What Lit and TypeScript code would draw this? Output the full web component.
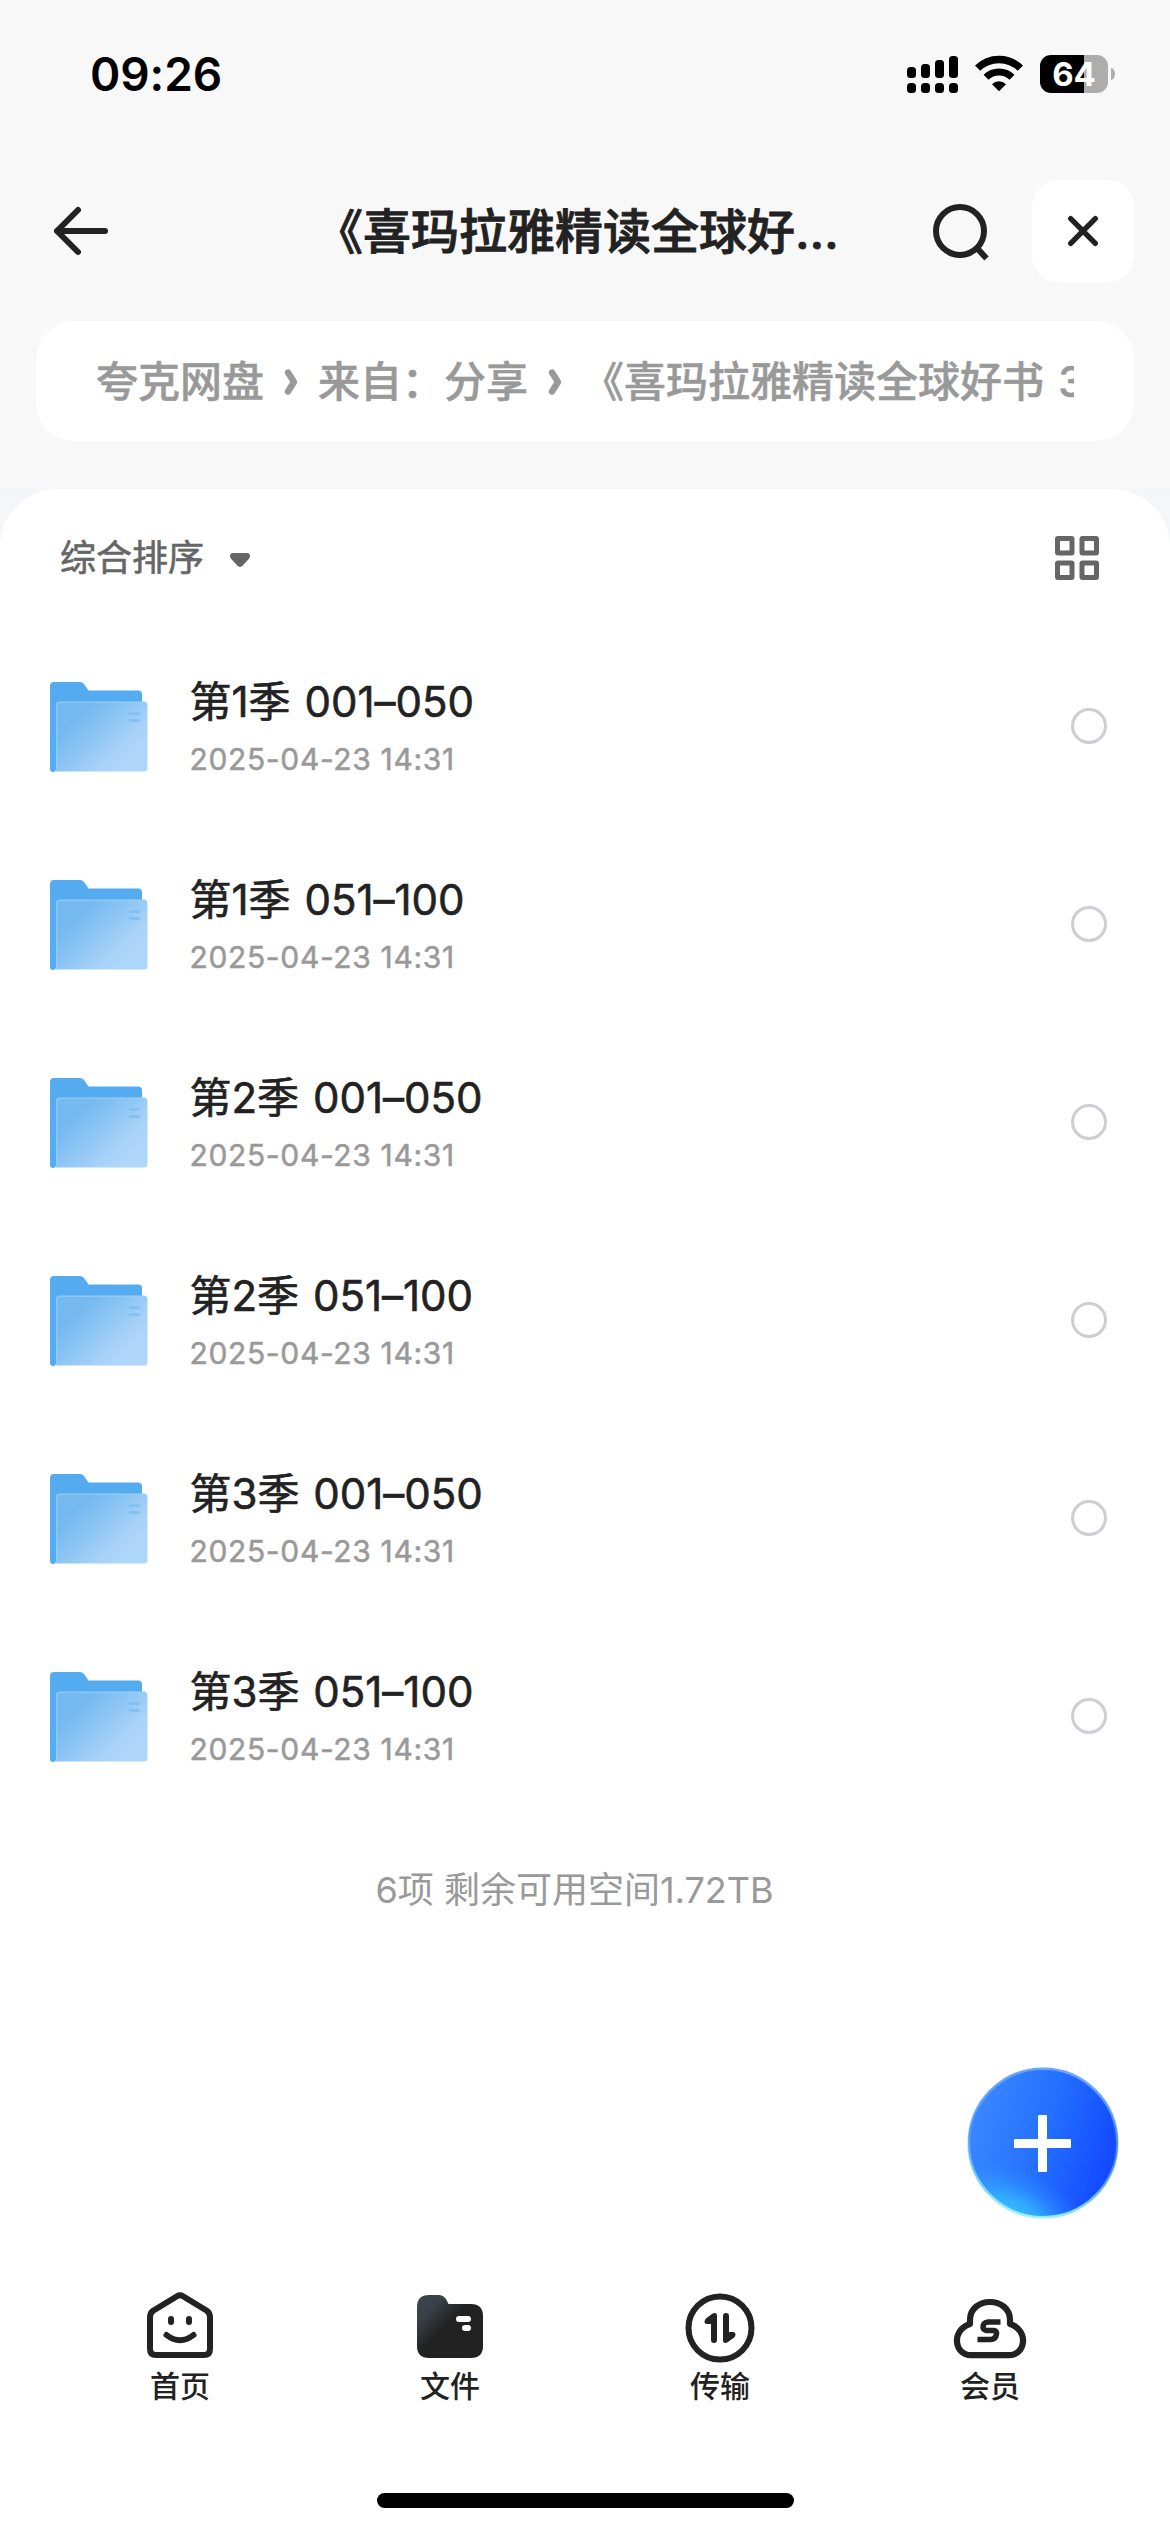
import { LitElement, html, css, svg } from "lit";
import { customElement, property } from "lit/decorators.js";

interface Folder {
  name: string;
  date: string;
}

const FOLDERS: Folder[] = [
  { name: "第1季 001–050", date: "2025-04-23 14:31" },
  { name: "第1季 051–100", date: "2025-04-23 14:31" },
  { name: "第2季 001–050", date: "2025-04-23 14:31" },
  { name: "第2季 051–100", date: "2025-04-23 14:31" },
  { name: "第3季 001–050", date: "2025-04-23 14:31" },
  { name: "第3季 051–100", date: "2025-04-23 14:31" },
];

const CRUMBS = ["夸克网盘", "来自：分享", "《喜玛拉雅精读全球好书 3"];

const SIGNAL = [
  { x: 0, top: 11 },
  { x: 14, top: 8 },
  { x: 28, top: 4 },
  { x: 42, top: 0 },
];

@customElement("status-bar")
class StatusBar extends LitElement {
  static styles = css`
    :host { display: flex; justify-content: space-between; align-items: center; height: 148px; padding: 0 55px 0 90px; box-sizing: border-box; }
    .time { font-size: 46px; font-weight: 600; line-height: 56px; color: #000; letter-spacing: -0.1px; }
    .icons { display: flex; align-items: center; }
    .signal { width: 51px; height: 38px; margin-right: 17px; display: block; }
    .wifi { width: 48px; height: 38px; margin-right: 17px; display: block; }
    .battery { display: flex; align-items: center; justify-content: center; width: 68px; height: 38px; border-radius: 11px; background: linear-gradient(90deg, #000 44px, #adadad 44px); color: #fff; font-size: 33px; font-weight: 700; line-height: 38px; }
    .knob { width: 4px; height: 12px; margin-left: 3px; border-radius: 0 4px 4px 0 / 0 6px 6px 0; background: #adadad; }
  `;
  render() {
    return html`
      <div class="time">09:26</div>
      <div class="icons">
        <svg class="signal" viewBox="0 0 51 38">
          ${SIGNAL.map((b) => svg`
            <rect x=${b.x} y=${b.top + 1} width="9" height=${22 - b.top} rx="3.5"></rect>
            <rect x=${b.x} y="28" width="9" height="10" rx="3.5"></rect>`)}
        </svg>
        <svg class="wifi" viewBox="0 0 48 38">
          <path d="M2.6 13.2A30.5 30.5 0 0 1 45.4 13.2" fill="none" stroke="#000" stroke-width="7.4"></path>
          <path d="M11 22.2A18.6 18.6 0 0 1 37 22.2" fill="none" stroke="#000" stroke-width="7"></path>
          <path d="M24 36.2L17 29.2A10 10 0 0 1 31 29.2Z"></path>
        </svg>
        <div class="battery">64</div>
        <div class="knob"></div>
      </div>
    `;
  }
}

@customElement("nav-header")
class NavHeader extends LitElement {
  static styles = css`
    :host { display: grid; grid-template-columns: 315px 1fr 102px 102px; align-items: center; height: 102px; margin-top: 32px; padding-right: 36px; box-sizing: border-box; }
    .back { display: block; width: 60px; height: 60px; margin-left: 51px; }
    .title { padding-top: 2px; font-size: 48px; font-weight: 500; line-height: 72px; color: #222; white-space: nowrap; -webkit-text-stroke: 0.9px #222; }
    .search { display: block; width: 60px; height: 60px; }
    .close { display: flex; align-items: center; justify-content: center; width: 102px; height: 102px; border-radius: 26px; background: #fff; }
    .x { display: block; width: 36px; height: 36px; }
  `;
  render() {
    return html`
      <svg class="back" viewBox="0 0 60 60" fill="none" stroke="#222" stroke-width="6" stroke-linecap="round" stroke-linejoin="round">
        <path d="M27 9L6 30L27 51M6 30H54"></path>
      </svg>
      <div class="title">《喜玛拉雅精读全球好…</div>
      <svg class="search" viewBox="0 0 60 60" fill="none" stroke="#222" stroke-width="6">
        <circle cx="30" cy="30" r="24"></circle>
        <path d="M46.5 46.5L56.5 57.5"></path>
      </svg>
      <div class="close">
        <svg class="x" viewBox="0 0 36 36" stroke="#222" stroke-width="5.4" stroke-linecap="round">
          <path d="M5.7 5.7L30.3 30.3M30.3 5.7L5.7 30.3"></path>
        </svg>
      </div>
    `;
  }
}

@customElement("crumb-bar")
class CrumbBar extends LitElement {
  static styles = css`
    :host { display: block; margin: 39px 36px 48px; height: 120px; padding: 0 60px; border-radius: 38px; background: #fff; box-sizing: border-box; }
    .track { display: flex; align-items: center; height: 120px; overflow: hidden; white-space: nowrap; font-size: 42px; font-weight: 500; color: #999; word-spacing: 3px; -webkit-text-stroke: 0.5px #999; }
    .crumb { flex: none; padding-top: 1px; line-height: 60px; }
    .sep { flex: none; width: 54px; height: 30px; display: block; }
  `;
  render() {
    return html`<div class="track">
      ${CRUMBS.map((c, i) => html`${i > 0
        ? html`<svg class="sep" viewBox="0 0 54 30" fill="none" stroke="#999" stroke-width="6.4" stroke-linecap="round" stroke-linejoin="round"><path d="M24 6.5L30 16L24 25.5"></path></svg>`
        : null}<span class="crumb">${c}</span>`)}
    </div>`;
  }
}

@customElement("folder-row")
class FolderRow extends LitElement {
  static styles = css`
    :host { display: flex; align-items: center; height: 198px; padding: 0 63px 0 50px; box-sizing: border-box; }
    .folder { display: block; width: 98px; height: 90px; margin-top: 2px; flex: none; }
    .text { flex: 1; margin-left: 41.5px; }
    .name { font-size: 42px; font-weight: 400; line-height: 60px; color: #222; white-space: nowrap; word-spacing: 2px; font-feature-settings: "calt" 0; -webkit-text-stroke: 0.6px #222; }
    .date { margin-top: 6px; font-size: 30px; font-weight: 400; line-height: 42px; color: #999; letter-spacing: 0.65px; white-space: nowrap; -webkit-text-stroke: 0.5px #999; }
    .radio { flex: none; width: 36px; height: 36px; box-sizing: border-box; border: 3.5px solid #cdcdd3; border-radius: 50%; }
  `;
  @property({ attribute: false }) folder!: Folder;
  render() {
    return html`
      <svg class="folder" viewBox="0 0 98 90">
        <defs>
          <linearGradient id="front" gradientUnits="userSpaceOnUse" x1="28" y1="34" x2="72" y2="80">
            <stop offset="0" stop-color="#74b9f0"></stop>
            <stop offset="0.4" stop-color="#8cc5f4"></stop>
            <stop offset="0.8" stop-color="#a7d1f8"></stop>
            <stop offset="1" stop-color="#aed6fa"></stop>
          </linearGradient>
        </defs>
        <path d="M0 4Q0 0 4 0H30Q32.500 0 34 2L38.500 8.500H88Q92 8.500 92 12.500V60H6V87Q6 90 3 90Q0 90 0 87Z" fill="#55abef"></path>
        <path d="M6 23Q6 19.500 9.500 19.500H93.500Q97.500 19.500 97.500 23.500V86Q97.500 89.500 94 89.500H6Z" fill="url(#front)"></path>
        <path d="M6.700 89.500V23Q6.700 20.200 9.500 20.200H93.500" fill="none" stroke="#a0d0f6" stroke-width="1.4" opacity="0.6"></path>
        <path d="M79 31.500H89.500M79 38.500H89.500" stroke="#83c0f3" stroke-width="3"></path>
      </svg>
      <div class="text">
        <div class="name">${this.folder.name}</div>
        <div class="date">${this.folder.date}</div>
      </div>
      <div class="radio"></div>
    `;
  }
}

@customElement("tab-bar")
class TabBar extends LitElement {
  static styles = css`
    :host { display: grid; grid-template-columns: repeat(4, 270px); padding: 0 45px; }
    .tab { display: flex; flex-direction: column; align-items: center; font-size: 30px; font-weight: 500; line-height: 44px; color: #222; }
    .glyph { display: block; width: 78px; height: 78px; }
  `;
  render() {
    return html`
      <div class="tab">
        <svg class="glyph" viewBox="0 0 78 78" fill="none" stroke="#222" stroke-width="6" stroke-linecap="round" stroke-linejoin="round">
          <path d="M36 10.200Q39 8.300 42 10.200L65.500 24.500Q69 27 69 31V63Q69 69 63 69H15Q9 69 9 63V31Q9 27 12.500 24.500Z"></path>
          <path d="M30 33V36M48 33V36M25.500 49Q39 59.500 52.500 49"></path>
        </svg>
        首页
      </div>
      <div class="tab">
        <svg class="glyph" viewBox="0 0 78 78">
          <defs>
            <linearGradient id="dark" gradientUnits="userSpaceOnUse" x1="14" y1="16" x2="36" y2="38">
              <stop offset="0" stop-color="#3b424c"></stop>
              <stop offset="0.3" stop-color="#3a4048"></stop>
              <stop offset="1" stop-color="#222"></stop>
            </linearGradient>
          </defs>
          <path d="M6 21Q6 9 18 9H27Q33 9 35.500 14L37.500 18H60Q72 18 72 30V60Q72 72 60 72H18Q6 72 6 60Z" fill="url(#dark)"></path>
          <rect x="45" y="30" width="15" height="6" rx="3" fill="#fff"></rect>
          <rect x="51" y="39" width="9" height="6" rx="3" fill="#fff"></rect>
        </svg>
        文件
      </div>
      <div class="tab">
        <svg class="glyph" viewBox="0 0 78 78">
          <circle cx="39" cy="42" r="31.500" fill="none" stroke="#222" stroke-width="6"></circle>
          <path d="M36 30V54Q36 57 33 57Q30 57 30 54V38H26Q23.500 38 23.500 35.500Q23.500 33.500 25.500 32L31 28Q36 25.500 36 30Z" fill="#222"></path>
          <path d="M42 54V30Q42 27 45 27Q48 27 48 30V46H52Q54.500 46 54.500 48.500Q54.500 50.500 52.500 52L47 56Q42 58.500 42 54Z" fill="#222"></path>
        </svg>
        传输
      </div>
      <div class="tab">
        <svg class="glyph" viewBox="0 0 78 78" fill="none" stroke="#222" stroke-linejoin="round">
          <path d="M19 38V34C19 10 59 10 59 34V38C78 44 75 69.200 58 69.200H20C3 69.200 0 44 19 38Z" stroke-width="6.200"></path>
          <path d="M49.500 36H37C33.500 36 32 38.500 32 41Q32 43.500 35 44.500H43Q46 45 45.500 48C45 51.500 43 53.500 39.500 53.500H26.500" stroke-width="5.500"></path>
        </svg>
        会员
      </div>
    `;
  }
}

@customElement("app-root")
class AppRoot extends LitElement {
  static styles = css`
    :host { display: flex; flex-direction: column; position: relative; width: 1170px; height: 2532px; overflow: hidden; background: #f8f8f8; font-family: Inter, "Noto Sans CJK SC", sans-serif; }
    .backing { flex: 1; display: flex; background: #f4f6f9; }
    .panel { flex: 1; display: flex; flex-direction: column; border-radius: 58px 58px 0 0; background: #fff; }
    .tools { display: flex; align-items: center; height: 138px; padding: 0 71px 0 60px; }
    .sort { font-size: 36px; font-weight: 400; line-height: 52px; color: #666; -webkit-text-stroke: 0.6px #666; }
    .caret { display: block; width: 20px; height: 14px; margin: 3px auto 0 26px; }
    .grid { display: block; width: 44px; height: 44px; }
    .summary { margin: 49px 0 0; padding-right: 21px; text-align: center; font-size: 36px; font-weight: 400; line-height: 52px; color: #999; }
    .spacer { flex: 1; }
    .add { position: absolute; left: 967px; top: 2067px; width: 152px; height: 152px; }
    .home { width: 417px; height: 15px; margin: 85px auto 24px; border-radius: 8px; background: #000; }
  `;
  render() {
    return html`
      <status-bar></status-bar>
      <nav-header></nav-header>
      <crumb-bar></crumb-bar>
      <div class="backing">
        <div class="panel">
          <div class="tools">
            <span class="sort">综合排序</span>
            <svg class="caret" viewBox="0 0 20 14"><path d="M3 0H17Q20 0 20 3Q20 4.500 18.800 6L12.500 12.800Q10 15 7.500 12.800L1.200 6Q0 4.500 0 3Q0 0 3 0Z" fill="#666"></path></svg>
            <svg class="grid" viewBox="0 0 44 44" fill="none" stroke="#666" stroke-width="5">
              <rect x="2.5" y="2.5" width="14.500" height="14.500" rx="0.5"></rect>
              <rect x="27" y="2.5" width="14.500" height="14.500" rx="0.5"></rect>
              <rect x="2.5" y="27" width="14.500" height="14.500" rx="0.5"></rect>
              <rect x="27" y="27" width="14.500" height="14.500" rx="0.5"></rect>
            </svg>
          </div>
          ${FOLDERS.map((f) => html`<folder-row .folder=${f}></folder-row>`)}
          <p class="summary">6项 剩余可用空间1.72TB</p>
          <div class="spacer"></div>
          <tab-bar></tab-bar>
          <div class="home"></div>
        </div>
      </div>
      <svg class="add" viewBox="0 0 152 152">
        <defs>
          <linearGradient id="base" x1="0.05" y1="0.35" x2="0.95" y2="0.6">
            <stop offset="0" stop-color="#3a86ff"></stop>
            <stop offset="0.5" stop-color="#2470ff"></stop>
            <stop offset="1" stop-color="#144aff"></stop>
          </linearGradient>
          <radialGradient id="glow" gradientUnits="userSpaceOnUse" cx="0" cy="0" r="1" gradientTransform="translate(46 150) rotate(28) scale(92 50)">
            <stop offset="0" stop-color="#38c4ff"></stop>
            <stop offset="0.35" stop-color="#34b0ff" stop-opacity="0.85"></stop>
            <stop offset="1" stop-color="#2a80ff" stop-opacity="0"></stop>
          </radialGradient>
          <linearGradient id="rim" x1="0.6" y1="0" x2="0.4" y2="1">
            <stop offset="0" stop-color="#6ba4f8"></stop>
            <stop offset="0.5" stop-color="#6fb0ff" stop-opacity="0.5"></stop>
            <stop offset="1" stop-color="#9af4ff"></stop>
          </linearGradient>
        </defs>
        <circle cx="76" cy="76" r="75" fill="url(#base)"></circle>
        <circle cx="76" cy="76" r="75" fill="url(#glow)"></circle>
        <circle cx="76" cy="76" r="74.300" fill="none" stroke="url(#rim)" stroke-width="2.600"></circle>
        <rect x="47" y="72" width="57" height="9" rx="1" fill="#fff"></rect>
        <rect x="71" y="48" width="9" height="57" rx="1" fill="#fff"></rect>
      </svg>
    `;
  }
}
